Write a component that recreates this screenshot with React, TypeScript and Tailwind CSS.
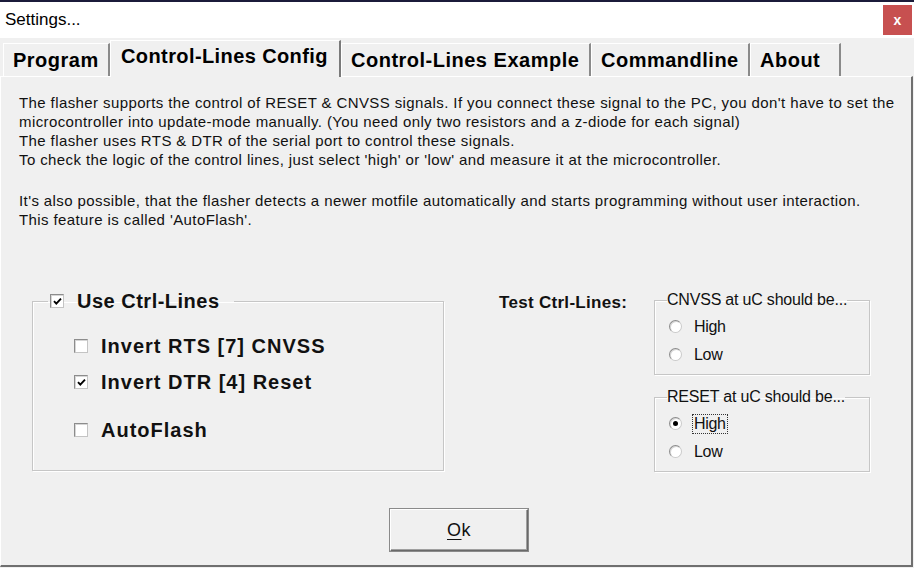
import React from 'react';

const sans = { fontFamily: '"Liberation Sans", Arial, sans-serif' };

function CheckMark() {
  return (
    <svg width="9" height="9" viewBox="0 0 9 9" className="block">
      <path d="M1 4.2 L3.3 6.6 L8 1.6" fill="none" stroke="#000" strokeWidth="1.9" />
    </svg>
  );
}

function Checkbox({ checked }: { checked?: boolean }) {
  return (
    <span className="flex items-center justify-center w-[14px] h-[14px] bg-white border border-t-[#8c8c8c] border-l-[#8c8c8c] border-r-[#c4c4c4] border-b-[#c4c4c4] shadow-[inset_1px_1px_0_#d6d6d6] shrink-0">
      {checked && <CheckMark />}
    </span>
  );
}

function Radio({ checked }: { checked?: boolean }) {
  return (
    <span className="flex items-center justify-center w-[13px] h-[13px] rounded-full bg-white border border-t-[#8c8c8c] border-l-[#8c8c8c] border-r-[#cacaca] border-b-[#cacaca] shadow-[inset_1px_1px_0_#d6d6d6] shrink-0">
      {checked && <span className="w-[5px] h-[5px] rounded-full bg-black" />}
    </span>
  );
}

function Tab({ label, width, active }: { label: string; width: string; active?: boolean }) {
  if (active) {
    return (
      <div className={`relative z-10 ${width} h-[37px] -mb-[1px] pl-[10px] pt-[2px] bg-[#f0f0f0] border-t border-l border-t-white border-l-white border-r-2 border-r-[#7a7a7a] flex items-start`}>
        <span className="text-[20px] font-bold text-black leading-[26px] tracking-[0.4px] whitespace-nowrap">{label}</span>
      </div>
    );
  }
  return (
    <div className={`${width} h-[33px] pl-[9px] pt-[3px] bg-[#f0f0f0] border-t border-l border-t-white border-l-white border-r-2 border-r-[#8a8a8a] flex items-start`}>
      <span className="text-[20px] font-bold text-black leading-[26px] tracking-[0.5px] whitespace-nowrap">{label}</span>
    </div>
  );
}

function Group({ title, options, selected, focus }: { title: string; options: string[]; selected?: number; focus?: boolean }) {
  return (
    <fieldset className="w-[216px] h-[84px] border border-[#c6c6c6] shadow-[inset_1px_1px_0_#fff,1px_1px_0_#fff] px-[14px]">
      <legend className="ml-[-2px] px-0 text-[16px] leading-[18px] text-[#111] tracking-[-0.2px]">{title}</legend>
      <div className="flex flex-col gap-[9px] mt-[8px]">
        {options.map((o, i) => (
          <div key={o} className="flex items-center gap-[11px] h-[19px]">
            <Radio checked={selected === i} />
            <span className={`text-[16px] leading-[18px] text-[#111] px-[1px] tracking-[-0.3px] ${focus && i === 0 ? 'outline outline-1 outline-dotted outline-[#333]' : ''}`}>{o}</span>
          </div>
        ))}
      </div>
    </fieldset>
  );
}

export default function App() {
  return (
    <div className="w-[914px] h-[568px] bg-[#f0f0f0] flex flex-col overflow-hidden" style={sans}>
      {/* Title bar */}
      <div className="h-[38px] bg-white border-t-2 border-t-[#1b1b3a] flex items-start justify-between">
        <span className="ml-[5px] mt-[8px] text-[17px] leading-[20px] text-black">Settings...</span>
        <div className="mt-[3px] mr-[2px] w-[29px] h-[30px] bg-[#c75050] flex items-center justify-center">
          <span className="text-white font-bold text-[14px] leading-none">x</span>
        </div>
      </div>

      {/* Tabs */}
      <div className="h-[38px] flex items-end pl-[3px]">
        <Tab label="Program" width="w-[107px]" />
        <Tab label="Control-Lines Config" width="w-[231px]" active />
        <Tab label="Control-Lines Example" width="w-[250px]" />
        <Tab label="Commandline" width="w-[159px]" />
        <Tab label="About" width="w-[91px]" />
      </div>

      {/* Panel */}
      <div className="flex-1 border-t border-l border-t-white border-l-white border-r-2 border-b-2 border-r-[#6f6f6f] border-b-[#6f6f6f] mr-[1px] mb-[1px] flex flex-col">
        <div className="pl-[18px] pt-[16px] text-[15px] leading-[19px] text-[#111] tracking-[0.4px] whitespace-nowrap">
          <p>The flasher supports the control of RESET &amp; CNVSS signals. If you connect these signal to the PC, you don't have to set the</p>
          <p>microcontroller into update-mode manually. (You need only two resistors and a z-diode for each signal)</p>
          <p>The flasher uses RTS &amp; DTR of the serial port to control these signals.</p>
          <p>To check the logic of the control lines, just select 'high' or 'low' and measure it at the microcontroller.</p>
          <p className="h-[22px]"></p>
          <p>It's also possible, that the flasher detects a newer motfile automatically and starts programming without user interaction.</p>
          <p>This feature is called 'AutoFlash'.</p>
        </div>

        <div className="flex mt-[62px]">
          <fieldset className="ml-[31px] w-[412px] h-[180px] border border-[#c6c6c6] shadow-[inset_1px_1px_0_#fff,1px_1px_0_#fff] pl-[41px]">
            <legend className="ml-[-26px] pl-[2px] pr-[14px]">
              <span className="flex items-center gap-[13px] h-[20px]">
                <Checkbox checked />
                <span className="text-[20px] font-bold text-[#111] leading-[20px] tracking-[0.5px]">Use Ctrl-Lines</span>
              </span>
            </legend>
            <div className="flex flex-col mt-[24px]">
              <div className="flex items-center gap-[13px] h-[22px]">
                <Checkbox />
                <span className="text-[20px] font-bold text-[#111] tracking-[1px]">Invert RTS [7] CNVSS</span>
              </div>
              <div className="flex items-center gap-[13px] h-[22px] mt-[14px]">
                <Checkbox checked />
                <span className="text-[20px] font-bold text-[#111] tracking-[1px]">Invert DTR [4] Reset</span>
              </div>
              <div className="flex items-center gap-[13px] h-[22px] mt-[26px]">
                <Checkbox />
                <span className="text-[20px] font-bold text-[#111] tracking-[1px]">AutoFlash</span>
              </div>
            </div>
          </fieldset>

          <div className="ml-[55px] w-[155px]">
            <span className="text-[17px] font-bold text-[#111] leading-[20px] tracking-[0.3px]">Test Ctrl-Lines:</span>
          </div>

          <div className="flex flex-col gap-[13px]">
            <Group title="CNVSS at uC should be..." options={['High', 'Low']} />
            <Group title="RESET at uC should be..." options={['High', 'Low']} selected={0} focus />
          </div>
        </div>

        <div className="flex mt-[37px] pl-[389px]">
          <button className="w-[138px] h-[42px] bg-[#f0f0f0] border border-t-white border-l-white border-r-[#696969] border-b-[#696969] shadow-[inset_-1px_-1px_0_#a0a0a0,0_0_0_1px_#8a8a8a] flex items-center justify-center">
            <span className="text-[18px] text-[#111] leading-none tracking-[0.5px]"><span className="underline underline-offset-[3px]">O</span>k</span>
          </button>
        </div>
      </div>
    </div>
  );
}
